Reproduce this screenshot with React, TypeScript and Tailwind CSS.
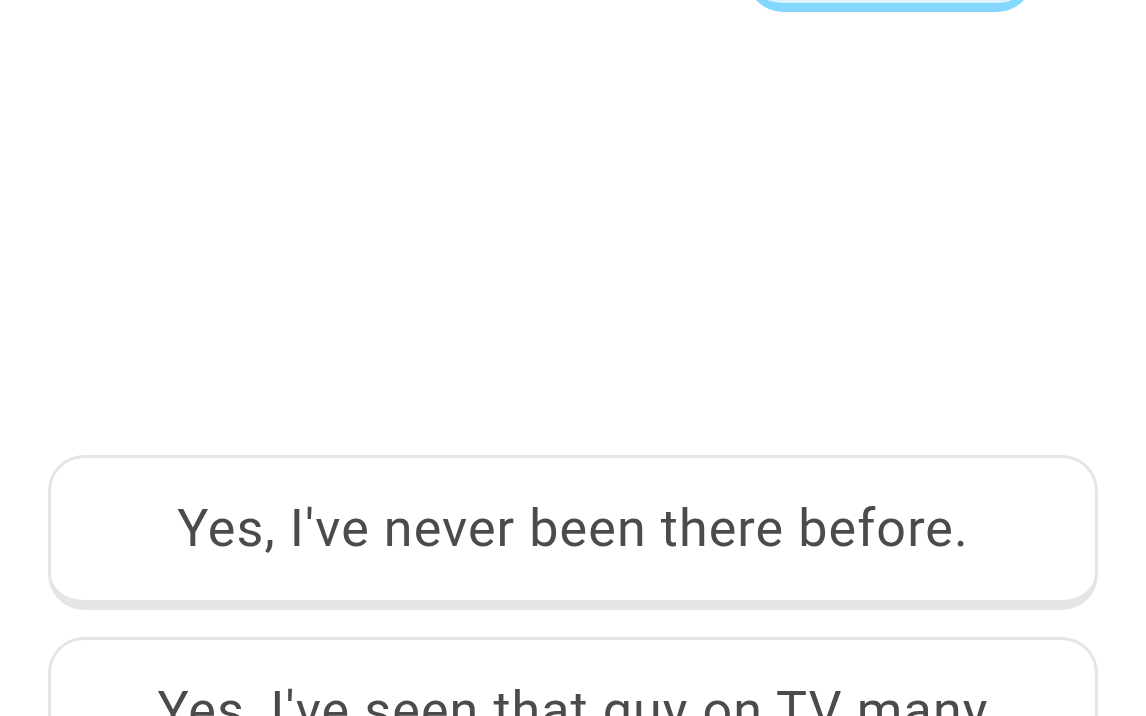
export default function App() {
  const options = [
    "Yes, I've never been there before.",
    "Yes, I've seen that guy on TV many times.",
  ];
  return (
    <div className="h-[716px] w-[1146px] overflow-hidden bg-white" style={{ fontFamily: "Roboto, 'Noto Sans', sans-serif" }}>
      <div className="flex justify-end pr-[113px]">
        <div className="-mt-[140px] h-[152px] w-[286px] rounded-[36px] border-[3px] border-b-[9px] border-[#84d8ff] bg-[#ddf4ff]" />
      </div>
      <div className="mt-[443px] flex flex-col gap-[27px] px-[48px]">
        {options.map((o) => (
          <div
            key={o}
            className="rounded-[36px] border-[3px] border-b-[10px] border-[#e5e5e5] bg-white px-[40px] py-[40px] text-center"
          >
            <span className="text-[52px] leading-[62px] tracking-[1.1px] text-[#4b4b4b]">{o}</span>
          </div>
        ))}
      </div>
    </div>
  );
}
